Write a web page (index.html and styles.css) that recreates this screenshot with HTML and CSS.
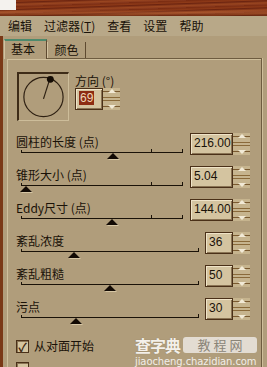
FILE: index.html
```html
<!DOCTYPE html>
<html lang="zh">
<head>
	<meta charset="UTF-8">
	<title>滤镜设置</title>
	<link rel="stylesheet" href="styles.css">
</head>
<body>
	<!-- window title strip -->
	<div class="wood"><span class="wood-sq"></span></div>
	<div class="menubar">
		<span>编辑</span>
		<span>过滤器(<u>T</u>)</span>
		<span>查看</span>
		<span>设置</span>
		<span>帮助</span>
	</div>
	<div class="window">
		<div class="frame-left"></div>
		<div class="main">
			<div class="tabs">
				<span class="tab active">基本</span>
				<span class="tab">颜色</span>
			</div>
			<div class="panel">
				<div class="dir-row">
					<div class="dial">
						<svg width="52" height="48" viewBox="0 0 52 48">
							<circle cx="27" cy="25" r="20" fill="none" stroke="#2e2012" stroke-width="1.2"/>
							<line x1="27" y1="27" x2="33" y2="8" stroke="#2e2012" stroke-width="1.2"/>
							<circle cx="34" cy="7" r="3.5" fill="#140c04"/>
						</svg>
					</div>
					<div class="dir-ctrl">
						<div class="label">方向 (°)</div>
						<div class="spin dir-spin">
							<span class="field narrow"><span class="sel">69</span></span>
							<span class="arrows"></span>
						</div>
					</div>
				</div>

				<div class="param">
					<div class="param-main">
						<div class="label">圆柱的长度 (点)</div>
						<div class="track short"><i class="tick mid"></i><span class="thumb" style="left:86px"></span></div>
					</div>
					<div class="spin"><span class="field">216.00</span><span class="arrows"></span></div>
				</div>
				<div class="param">
					<div class="param-main">
						<div class="label">锥形大小 (点)</div>
						<div class="track short"><i class="tick mid"></i><span class="thumb" style="left:-1px"></span></div>
					</div>
					<div class="spin"><span class="field">5.04</span><span class="arrows"></span></div>
				</div>
				<div class="param">
					<div class="param-main">
						<div class="label">Eddy尺寸 (点)</div>
						<div class="track short"><i class="tick mid"></i><span class="thumb" style="left:85px"></span></div>
					</div>
					<div class="spin"><span class="field">144.00</span><span class="arrows"></span></div>
				</div>
				<div class="param">
					<div class="param-main">
						<div class="label">紊乱浓度</div>
						<div class="track long"><span class="thumb" style="left:47px"></span></div>
					</div>
					<div class="spin"><span class="field narrow">36</span><span class="arrows"></span></div>
				</div>
				<div class="param">
					<div class="param-main">
						<div class="label">紊乱粗糙</div>
						<div class="track long"><span class="thumb" style="left:83px"></span></div>
					</div>
					<div class="spin"><span class="field narrow">50</span><span class="arrows"></span></div>
				</div>
				<div class="param">
					<div class="param-main">
						<div class="label">污点</div>
						<div class="track long"><span class="thumb" style="left:49px"></span></div>
					</div>
					<div class="spin"><span class="field narrow">30</span><span class="arrows"></span></div>
				</div>

				<label class="check-row"><span class="check">✓</span>从对面开始</label>
				<div class="check-row"><span class="check"></span></div>
			</div>
		</div>
	</div>

	<!-- site watermark -->
	<div class="watermark">
		<div class="wm-top"><span class="wm-name">查字典</span><span class="wm-box">教 程 网</span></div>
		<div class="wm-url">jiaocheng.chazidian.com</div>
	</div>
</body>
</html>
```

FILE: styles.css
```css
* {
	box-sizing: border-box;
}
html, body {
	margin: 0;
	padding: 0;
	width: 267px;
	height: 367px;
	overflow: hidden;
}
body {
	position: relative;
	background: #b09d7b;
	color: #1a1208;
	font-family: "Noto Sans CJK SC", "DejaVu Sans", sans-serif;
	font-size: 12px;
}
.wood {
	height: 16px;
	background:
		linear-gradient(180deg, rgba(0,0,0,0) 0, rgba(0,0,0,0) 60%, rgba(200,120,70,0.35) 80%, rgba(80,30,10,0.4) 100%),
		repeating-linear-gradient(178deg, #7a2c12 0, #8e3a18 2px, #6c2410 3px, #9a4620 5px, #83341a 7px);
}
.wood-sq {
	display: block;
	width: 16px;
	height: 10px;
	background: #f4f2ee;
}
.menubar {
	height: 20px;
	display: flex;
	align-items: center;
	gap: 12px;
	padding-left: 8px;
	background: #b8a888;
	line-height: 20px;
}
.window {
	display: flex;
	height: 331px;
}
.frame-left {
	width: 3px;
	background: #7a3816;
}
.main {
	flex: 1;
	padding: 2px 0 0 1px;
}
.tabs {
	display: flex;
	align-items: flex-end;
	height: 20px;
}
.tab {
	height: 16px;
	width: 39px;
	line-height: 16px;
	text-align: center;
	border-left: 1px solid #d2c2a0;
	border-right: 1px solid #5e4a30;
	background: #b09d7b;
}
.tab.active {
	height: 20px;
	width: 43px;
	line-height: 16px;
	text-align: left;
	padding-left: 6px;
	border-top: 2px solid #4e8a6c;
	position: relative;
	z-index: 1;
	margin-bottom: -1px;
}
.panel {
	margin-left: 3px;
	width: 255px;
	height: 320px;
	border-top: 1px solid #6e5c40;
	border-right: 1px solid #6e5c40;
	box-shadow: inset 1px 1px 0 #cfbf9c, 1px 0 0 #cfbf9c;
	padding: 13px 11px 0 9px;
}
.dir-row {
	display: flex;
	margin-left: 1px;
	height: 62px;
}
.dial {
	width: 52px;
	height: 49px;
	border-left: 2px solid #3e2c18;
	border-top: 2px solid #3e2c18;
	border-right: 1px solid #cdbd9a;
	border-bottom: 1px solid #cdbd9a;
	display: flex;
}
.dial svg {
	margin: -2px 0 0 -2px;
}
.dir-ctrl {
	margin-left: 6px;
	padding-top: 1px;
}
.label {
	height: 16px;
	line-height: 16px;
	white-space: nowrap;
}
.dir-spin {
	margin-top: 8px;
}
.param {
	display: flex;
	align-items: flex-start;
	height: 33px;
}
.param-main {
	flex: 1;
}
.track {
	position: relative;
	height: 17px;
	margin-left: 5px;
}
.track::before {
	content: "";
	position: absolute;
	left: 0;
	right: 0;
	top: 2px;
	border-top: 1px solid #1a1208;
}
.track::after,
.tick {
	content: "";
	position: absolute;
	right: 0;
	top: -1px;
	height: 4px;
	border-left: 1px solid #1a1208;
}
.tick.mid {
	right: auto;
	left: 130px;
}
.track.short {
	width: 162px;
	background: linear-gradient(#1a1208, #1a1208) 0 -1px / 1px 4px no-repeat;
}
.track.long {
	width: 178px;
	background: linear-gradient(#1a1208, #1a1208) 0 -1px / 1px 4px no-repeat;
}
.thumb {
	position: absolute;
	top: 3px;
	width: 0;
	height: 0;
	border-left: 6px solid transparent;
	border-right: 6px solid transparent;
	border-bottom: 6px solid #120a04;
	filter: drop-shadow(1px 1px 0 #d6c6a4);
}
.spin {
	display: flex;
	margin-top: -1px;
}
.field {
	width: 43px;
	height: 22px;
	line-height: 19px;
	padding-left: 3px;
	border: 1px solid #4a3018;
	box-shadow: inset 1px 1px 0 #f0e4c8, inset -1px -1px 0 #8a7454;
	background: #d4c4a0;
	font-family: "Liberation Sans", Arial, sans-serif;
	font-size: 12px;
	white-space: nowrap;
	overflow: hidden;
}
.field.narrow {
	width: 28px;
}
.sel {
	display: inline-block;
	background: #8c2c12;
	color: #f0d8b8;
	line-height: 14px;
	padding: 0 1px;
	margin-top: 2px;
}
.arrows {
	width: 17px;
	height: 22px;
	background:
		linear-gradient(180deg, transparent 3px, #7a5a30 3px, #7a5a30 4px, transparent 4px, transparent 9px, #8a6a3a 9px, #8a6a3a 10px, transparent 10px, transparent 12px, #8a6a3a 12px, #8a6a3a 13px, transparent 13px, transparent 18px, #7a5a30 18px, #7a5a30 19px, transparent 19px) 0 0 / 100% 100% no-repeat,
		#c6b48e;
	position: relative;
}
.arrows::before,
.arrows::after {
	content: "";
	position: absolute;
	left: 5px;
	width: 0;
	height: 0;
	border-left: 4px solid transparent;
	border-right: 4px solid transparent;
}
.arrows::before {
	top: 1px;
	border-bottom: 4px solid #f2ead6;
}
.arrows::after {
	bottom: 1px;
	border-top: 4px solid #f2ead6;
}
.check-row {
	display: flex;
	align-items: center;
	gap: 5px;
	height: 14px;
	margin-top: 7px;
	line-height: 14px;
}
.check {
	width: 13px;
	height: 13px;
	border: 1px solid #4a3018;
	box-shadow: inset 1px 1px 0 #8a7454;
	background: #d4c4a0;
	color: #3a2410;
	font-size: 12px;
	font-weight: bold;
	line-height: 11px;
	text-align: center;
}
.check-row + .check-row {
	margin-top: 8px;
}
.watermark {
	position: absolute;
	left: 135px;
	top: 336px;
	width: 122px;
	font-family: "Noto Sans CJK SC", sans-serif;
}
.wm-top {
	display: flex;
	align-items: center;
	gap: 3px;
	height: 18px;
}
.wm-name {
	color: #f4f0ea;
	font-size: 16px;
	font-weight: bold;
	letter-spacing: -1px;
	line-height: 18px;
	text-shadow: 0 0 1px #8a7a60;
}
.wm-box {
	flex: 1;
	height: 16px;
	border-radius: 3px;
	background: rgba(236, 232, 226, 0.85);
	color: #8a8478;
	font-size: 13px;
	line-height: 16px;
	text-align: center;
}
.wm-url {
	color: #f2eee8;
	font-family: "DejaVu Sans", sans-serif;
	font-size: 10px;
	line-height: 12px;
	margin-top: 2px;
	letter-spacing: -0.1px;
}
```
